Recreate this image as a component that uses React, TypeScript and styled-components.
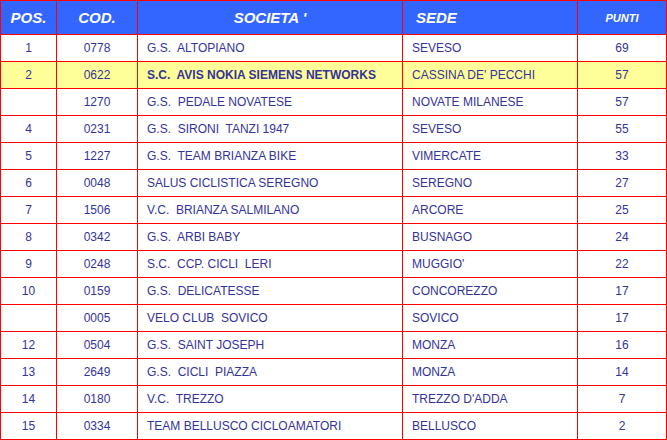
import React from 'react'
import styled, { createGlobalStyle } from 'styled-components';

const GlobalStyle = createGlobalStyle`
	html, body {
		margin: 0;
		padding: 0;
		background: #ffffff;
	}
`;

const Table = styled.table`
	border-collapse: collapse;
	table-layout: fixed;
	width: 666px;
	font-family: "Liberation Sans", Arial, sans-serif;
`;

const HeadCell = styled.th<{ $small?: boolean; $left?: boolean }>`
	height: 33px;
	padding: 0 0 0 ${p => (p.$left ? '13px' : '0')};
	border: 1px solid #ff0000;
	background: #3366ff;
	color: #ffffff;
	font-size: ${p => (p.$small ? '11px' : '15px')};
	font-style: italic;
	font-weight: bold;
	text-align: ${p => (p.$left ? 'left' : 'center')};
	white-space: pre;
`;

const Row = styled.tr<{ $highlight?: boolean }>`
	background: ${p => (p.$highlight ? '#ffff99' : '#ffffff')};
`;

const Cell = styled.td<{ $left?: boolean; $bold?: boolean }>`
	height: 26px;
	padding: 0 0 0 ${p => (p.$left ? '9px' : '0')};
	border: 1px solid #ff0000;
	color: #333399;
	font-size: 12px;
	font-weight: ${p => (p.$bold ? 'bold' : 'normal')};
	text-align: ${p => (p.$left ? 'left' : 'center')};
	white-space: pre;
	overflow: hidden;
`;

type Entry = {
	pos: string
	cod: string
	societa: string
	sede: string
	punti: string
	highlight?: boolean
}

const rows: Entry[] = [
	{ pos: '1', cod: '0778', societa: 'G.S.  ALTOPIANO', sede: 'SEVESO', punti: '69' },
	{ pos: '2', cod: '0622', societa: 'S.C.  AVIS NOKIA SIEMENS NETWORKS', sede: "CASSINA DE' PECCHI", punti: '57', highlight: true },
	{ pos: '', cod: '1270', societa: 'G.S.  PEDALE NOVATESE', sede: 'NOVATE MILANESE', punti: '57' },
	{ pos: '4', cod: '0231', societa: 'G.S.  SIRONI  TANZI 1947', sede: 'SEVESO', punti: '55' },
	{ pos: '5', cod: '1227', societa: 'G.S.  TEAM BRIANZA BIKE', sede: 'VIMERCATE', punti: '33' },
	{ pos: '6', cod: '0048', societa: 'SALUS CICLISTICA SEREGNO', sede: 'SEREGNO', punti: '27' },
	{ pos: '7', cod: '1506', societa: 'V.C.  BRIANZA SALMILANO', sede: 'ARCORE', punti: '25' },
	{ pos: '8', cod: '0342', societa: 'G.S.  ARBI BABY', sede: 'BUSNAGO', punti: '24' },
	{ pos: '9', cod: '0248', societa: 'S.C.  CCP. CICLI  LERI', sede: "MUGGIO'", punti: '22' },
	{ pos: '10', cod: '0159', societa: 'G.S.  DELICATESSE', sede: 'CONCOREZZO', punti: '17' },
	{ pos: '', cod: '0005', societa: 'VELO CLUB  SOVICO', sede: 'SOVICO', punti: '17' },
	{ pos: '12', cod: '0504', societa: 'G.S.  SAINT JOSEPH', sede: 'MONZA', punti: '16' },
	{ pos: '13', cod: '2649', societa: 'G.S.  CICLI  PIAZZA', sede: 'MONZA', punti: '14' },
	{ pos: '14', cod: '0180', societa: 'V.C.  TREZZO', sede: "TREZZO D'ADDA", punti: '7' },
	{ pos: '15', cod: '0334', societa: 'TEAM BELLUSCO CICLOAMATORI', sede: 'BELLUSCO', punti: '2' },
]

const App = () => {
  return (
	<>
		<GlobalStyle />
		<Table>
			<colgroup>
				<col style={{ width: 56 }} />
				<col style={{ width: 81 }} />
				<col style={{ width: 265 }} />
				<col style={{ width: 175 }} />
				<col style={{ width: 89 }} />
			</colgroup>
			<thead>
				<tr>
					<HeadCell>POS.</HeadCell>
					<HeadCell>COD.</HeadCell>
					<HeadCell>SOCIETA '</HeadCell>
					<HeadCell $left>SEDE</HeadCell>
					<HeadCell $small>PUNTI</HeadCell>
				</tr>
			</thead>
			<tbody>
				{rows.map((r, i) => (
					<Row key={i} $highlight={r.highlight}>
						<Cell>{r.pos}</Cell>
						<Cell>{r.cod}</Cell>
						<Cell $left $bold={r.highlight}>{r.societa}</Cell>
						<Cell $left>{r.sede}</Cell>
						<Cell>{r.punti}</Cell>
					</Row>
				))}
			</tbody>
		</Table>
	</>
  )
}

export default App
